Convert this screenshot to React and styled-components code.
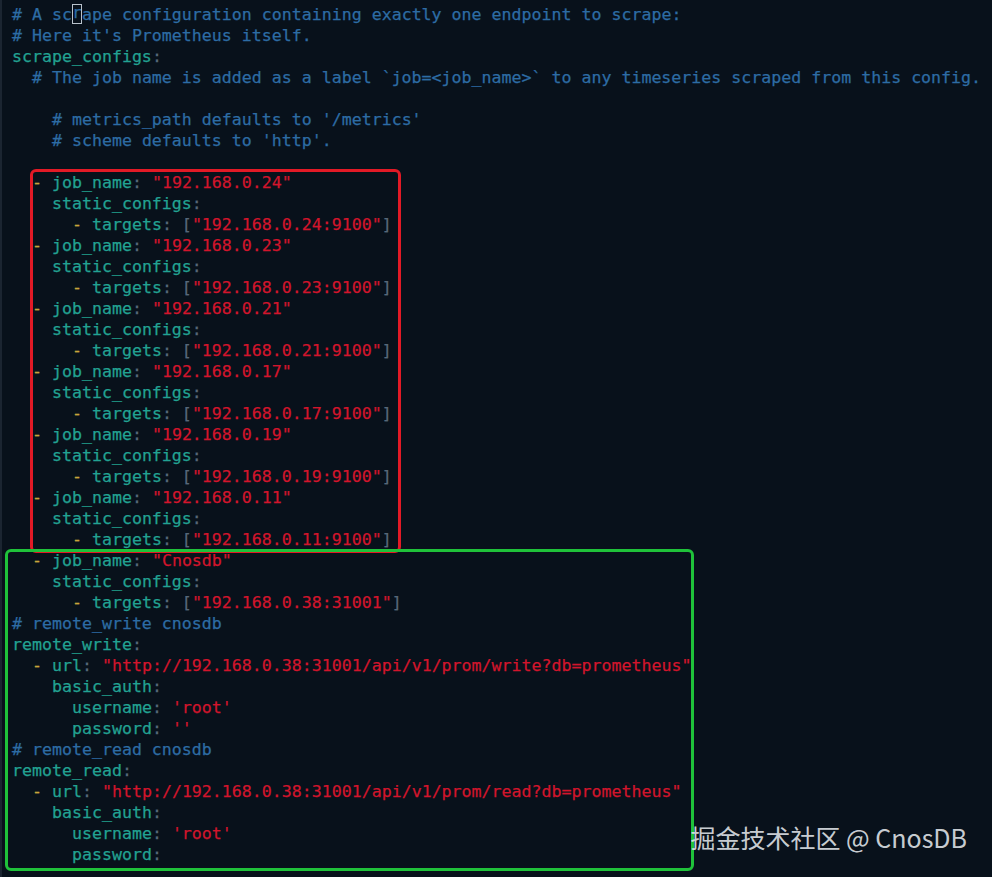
import React from "react";
import styled, { createGlobalStyle } from "styled-components";

const Global = createGlobalStyle`
  html, body { margin: 0; padding: 0; background: #08111b; }
`;

const Terminal = styled.div`
  position: relative;
  box-sizing: border-box;
  width: 992px;
  height: 877px;
  overflow: hidden;
  background: #08111b;
  border-left: 2px solid #1b2531;
  padding: 4px 0 0 10px;
  font-family: "DejaVu Sans Mono", "Liberation Mono", monospace;
  font-size: 16.6px;
  line-height: 21px;
  -webkit-text-stroke: 0.25px currentColor;
`;

const Code = styled.div`
  display: flex;
  flex-direction: column;
`;

const Block = styled.div`
  position: relative;
  display: flex;
  flex-direction: column;

  &::after {
    content: "";
    position: absolute;
    box-sizing: border-box;
    border: 3px solid ${(p) => p.$color};
    border-radius: 6px;
    left: ${(p) => p.$left}px;
    top: ${(p) => p.$top}px;
    width: ${(p) => p.$width}px;
    bottom: ${(p) => p.$bottom}px;
    pointer-events: none;
  }
`;

const Line = styled.div`
  position: relative;
  height: 21px;
  white-space: pre;
  color: #5c6e7a;
`;

const colors = {
  c: "#2d6ca4",
  k: "#22a292",
  s: "#d2152c",
  d: "#c9a43c",
  p: "#56687a",
};

const Tok = styled.span`
  color: ${(p) => colors[p.$t]};
`;

const CursorCell = styled.span`
  display: inline-block;
  box-sizing: border-box;
  height: 20px;
  line-height: 18px;
  vertical-align: top;
  outline: 1.5px solid #b9c2cc;
  outline-offset: -1.5px;
`;

const Watermark = styled.div`
  position: absolute;
  right: 25px;
  bottom: 25px;
  font-family: "Noto Sans CJK SC", "Noto Sans", sans-serif;
  font-size: 25px;
  line-height: 30px;
  color: rgba(226, 230, 234, 0.9);
  white-space: pre;
  -webkit-text-stroke: 0;
`;

const job = (ip, target) => [
  [["", "  "], ["d", "-"], ["", " "], ["k", "job_name"], ["p", ": "], ["s", `"${ip}"`]],
  [["", "    "], ["k", "static_configs"], ["p", ":"]],
  [["", "      "], ["d", "-"], ["", " "], ["k", "targets"], ["p", ": ["], ["s", `"${target}"`], ["p", "]"]],
];

const header = [
  [["c", "# A sc"], ["cur", "r"], ["c", "ape configuration containing exactly one endpoint to scrape:"]],
  [["c", "# Here it's Prometheus itself."]],
  [["k", "scrape_configs"], ["p", ":"]],
  [["", "  "], ["c", "# The job name is added as a label `job=<job_name>` to any timeseries scraped from this config."]],
  [],
  [["", "    "], ["c", "# metrics_path defaults to '/metrics'"]],
  [["", "    "], ["c", "# scheme defaults to 'http'."]],
  [],
];

const nodeJobs = [
  ...job("192.168.0.24", "192.168.0.24:9100"),
  ...job("192.168.0.23", "192.168.0.23:9100"),
  ...job("192.168.0.21", "192.168.0.21:9100"),
  ...job("192.168.0.17", "192.168.0.17:9100"),
  ...job("192.168.0.19", "192.168.0.19:9100"),
  ...job("192.168.0.11", "192.168.0.11:9100"),
];

const cnosdb = [
  ...job("Cnosdb", "192.168.0.38:31001"),
  [["c", "# remote_write cnosdb"]],
  [["k", "remote_write"], ["p", ":"]],
  [["", "  "], ["d", "-"], ["", " "], ["k", "url"], ["p", ": "], ["s", '"http://192.168.0.38:31001/api/v1/prom/write?db=prometheus"']],
  [["", "    "], ["k", "basic_auth"], ["p", ":"]],
  [["", "      "], ["k", "username"], ["p", ": "], ["s", "'root'"]],
  [["", "      "], ["k", "password"], ["p", ": "], ["s", "''"]],
  [["c", "# remote_read cnosdb"]],
  [["k", "remote_read"], ["p", ":"]],
  [["", "  "], ["d", "-"], ["", " "], ["k", "url"], ["p", ": "], ["s", '"http://192.168.0.38:31001/api/v1/prom/read?db=prometheus"']],
  [["", "    "], ["k", "basic_auth"], ["p", ":"]],
  [["", "      "], ["k", "username"], ["p", ": "], ["s", "'root'"]],
  [["", "      "], ["k", "password"], ["p", ":"]],
];

function Lines({ data }) {
  return data.map((toks, i) => (
    <Line key={i}>
      {toks.length === 0
        ? " "
        : toks.map(([t, text], j) => {
            if (t === "cur")
              return (
                <CursorCell key={j}>
                  <Tok $t="c">{text}</Tok>
                </CursorCell>
              );
            return t ? (
              <Tok key={j} $t={t}>
                {text}
              </Tok>
            ) : (
              <span key={j}>{text}</span>
            );
          })}
    </Line>
  ));
}

export default function App() {
  return (
    <>
      <Global />
      <Terminal>
        <Code>
          <Lines data={header} />
          <Block $color="#e21a26" $left={18} $top={-3} $width={371} $bottom={-3}>
            <Lines data={nodeJobs} />
          </Block>
          <Block $color="#1fc23a" $left={-7} $top={-1} $width={689} $bottom={-6}>
            <Lines data={cnosdb} />
          </Block>
        </Code>
        <Watermark>掘金技术社区 @ CnosDB</Watermark>
      </Terminal>
    </>
  );
}
